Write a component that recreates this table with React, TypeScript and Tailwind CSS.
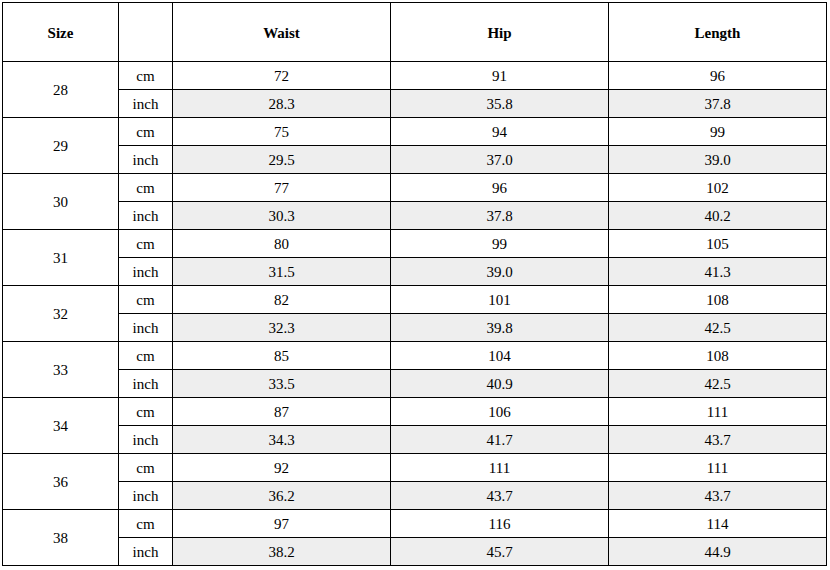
import React from "react";

const data: [string, string[], string[]][] = [
  ["28", ["72", "91", "96"], ["28.3", "35.8", "37.8"]],
  ["29", ["75", "94", "99"], ["29.5", "37.0", "39.0"]],
  ["30", ["77", "96", "102"], ["30.3", "37.8", "40.2"]],
  ["31", ["80", "99", "105"], ["31.5", "39.0", "41.3"]],
  ["32", ["82", "101", "108"], ["32.3", "39.8", "42.5"]],
  ["33", ["85", "104", "108"], ["33.5", "40.9", "42.5"]],
  ["34", ["87", "106", "111"], ["34.3", "41.7", "43.7"]],
  ["36", ["92", "111", "111"], ["36.2", "43.7", "43.7"]],
  ["38", ["97", "116", "114"], ["38.2", "45.7", "44.9"]],
];

const cell = "border-r border-b border-black flex items-center justify-center pt-[2px]";

export default function App() {
  return (
    <div className="w-[830px] h-[570px] bg-white pl-[2px] pt-[2px] text-[15px] leading-none text-black font-['Liberation_Serif','Times_New_Roman',serif]">
      <div className="grid grid-cols-[116px_54px_218px_218px_218px] grid-rows-[59px_repeat(18,28px)] w-[825px] border-l border-t border-black">
        <div className={`${cell} font-bold`}>Size</div>
        <div className={cell}></div>
        <div className={`${cell} font-bold`}>Waist</div>
        <div className={`${cell} font-bold`}>Hip</div>
        <div className={`${cell} font-bold`}>Length</div>
        {data.map(([size, cm, inch]) => (
          <React.Fragment key={size}>
            <div className={`${cell} row-span-2`}>{size}</div>
            <div className={cell}>cm</div>
            {cm.map((v, i) => (
              <div key={"c" + i} className={cell}>{v}</div>
            ))}
            <div className={cell}>inch</div>
            {inch.map((v, i) => (
              <div key={"i" + i} className={`${cell} bg-[#eeeeee]`}>{v}</div>
            ))}
          </React.Fragment>
        ))}
      </div>
    </div>
  );
}
